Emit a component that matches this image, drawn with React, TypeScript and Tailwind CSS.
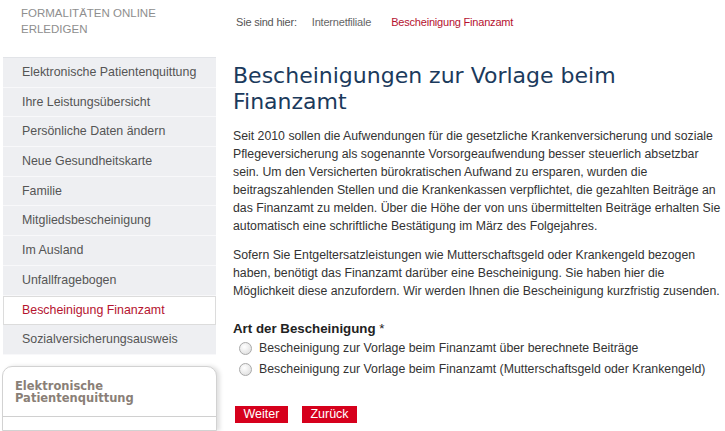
const menu = [
  "Elektronische Patientenquittung",
  "Ihre Leistungsübersicht",
  "Persönliche Daten ändern",
  "Neue Gesundheitskarte",
  "Familie",
  "Mitgliedsbescheinigung",
  "Im Ausland",
  "Unfallfragebogen",
  "Bescheinigung Finanzamt",
  "Sozialversicherungsausweis",
];

const active = "Bescheinigung Finanzamt";

export default function App() {
  return (
    <div className="flex h-[431px] w-[725px] overflow-hidden bg-white font-['Liberation_Sans',Arial,sans-serif] text-[#333]">
      {/* Sidebar */}
      <aside className="flex w-[219px] shrink-0 flex-col">
        <div className="h-[57px] pl-[21px] pt-[5px] text-[11.5px] uppercase leading-[16px] text-[#8e8e8e]">
          Formalitäten online
          <br />
          erledigen
        </div>

        <ul className="ml-[3px] w-[213px] border-t border-[#e2e4e8]">
          {menu.map((item) => (
            <li
              key={item}
              className={
                item === active
                  ? "flex h-[29.7px] items-center border border-[#dcdcdc] bg-white pl-[18px] text-[12.4px] text-[#b5142f]"
                  : "flex h-[29.7px] items-center border-b border-[#f8f8fa] bg-[#eeeff2] pl-[19px] text-[12.4px] text-[#555]"
              }
            >
              {item}
            </li>
          ))}
        </ul>

        <div className="ml-[2px] mt-[11px] w-[215px] flex-1 rounded-t-[10px] border border-[#d2d2d2] bg-white shadow-[3px_0_4px_rgba(0,0,0,0.12)]">
          <div className="border-b border-[#d0d0d0] px-[12px] pb-[11px] pt-[13px] font-['DejaVu_Sans',Verdana,sans-serif] text-[11.5px] font-bold leading-[12.5px] text-[#8a7f77]">
            Elektronische
            <br />
            Patientenquittung
          </div>
        </div>
      </aside>

      {/* Main */}
      <main className="ml-[14px] w-[492px] shrink-0">
        <div className="flex h-[45px] items-center pb-[1px] pl-[3px] text-[11px] tracking-[-0.2px]">
          <span className="text-[#555]">Sie sind hier:</span>
          <span className="ml-[15px] text-[#666]">Internetfiliale</span>
          <span className="ml-[20px] text-[#b5112f]">Bescheinigung Finanzamt</span>
        </div>

        <h1 className="mt-[18px] font-['DejaVu_Sans',Verdana,sans-serif] text-[22px] leading-[26px] text-[#1b3a5c]">
          Bescheinigungen zur Vorlage beim
          <br />
          Finanzamt
        </h1>

        <p className="mt-[12px] text-[12.3px] leading-[18px]">
          Seit 2010 sollen die Aufwendungen für die gesetzliche Krankenversicherung und soziale
          Pflegeversicherung als sogenannte Vorsorgeaufwendung besser steuerlich absetzbar
          <br />
          sein. Um den Versicherten bürokratischen Aufwand zu ersparen, wurden die
          <br />
          beitragszahlenden Stellen und die Krankenkassen verpflichtet, die gezahlten Beiträge an
          <br />
          das Finanzamt zu melden. Über die Höhe der von uns übermittelten Beiträge erhalten Sie
          <br />
          automatisch eine schriftliche Bestätigung im März des Folgejahres.
        </p>

        <p className="mt-[11px] text-[12.3px] leading-[18px]">
          Sofern Sie Entgeltersatzleistungen wie Mutterschaftsgeld oder Krankengeld bezogen
          <br />
          haben, benötigt das Finanzamt darüber eine Bescheinigung. Sie haben hier die
          <br />
          Möglichkeit diese anzufordern. Wir werden Ihnen die Bescheinigung kurzfristig zusenden.
        </p>

        <div className="mt-[21px] text-[13.3px] leading-[16px] text-[#222]">
          <span className="font-bold">Art der Bescheinigung</span> *
        </div>

        <div className="mt-[3px] flex flex-col gap-[5px] pl-[6px] text-[12.3px] leading-[16px]">
          <Radio label="Bescheinigung zur Vorlage beim Finanzamt über berechnete Beiträge" />
          <Radio label="Bescheinigung zur Vorlage beim Finanzamt (Mutterschaftsgeld oder Krankengeld)" />
        </div>

        <div className="mt-[29px] flex gap-[14px] pl-[2px]">
          <button className="h-[17px] w-[53px] bg-[#d6001c] text-[12.5px] leading-[17px] text-white">
            Weiter
          </button>
          <button className="h-[17px] w-[55px] bg-[#d6001c] text-[12.5px] leading-[17px] text-white">
            Zurück
          </button>
        </div>
      </main>
    </div>
  );
}

function Radio({ label }: { label: string }) {
  return (
    <label className="flex items-center gap-[7px]">
      <span className="h-[13px] w-[13px] shrink-0 rounded-full border border-[#a9a9a9] bg-[radial-gradient(circle_at_40%_35%,#ffffff,#d9d9d9)]" />
      <span>{label}</span>
    </label>
  );
}
